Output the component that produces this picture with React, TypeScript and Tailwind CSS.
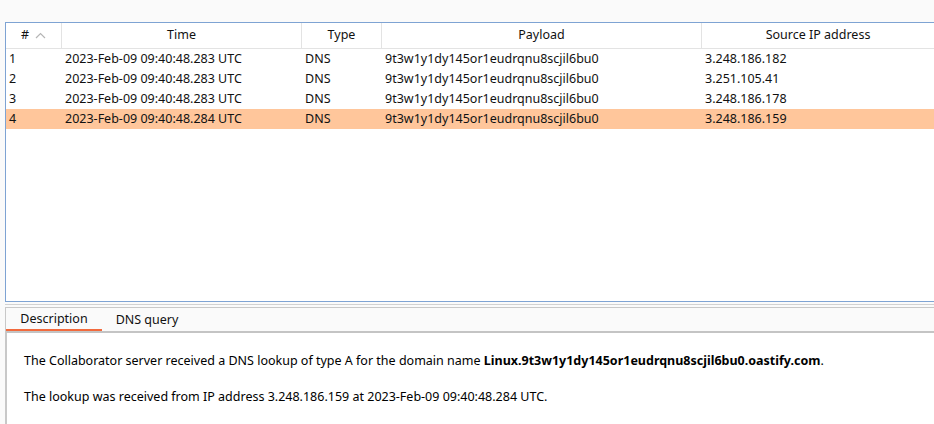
import React from "react";

const rows = [
  { n: "1", time: "2023-Feb-09 09:40:48.283 UTC", type: "DNS", payload: "9t3w1y1dy145or1eudrqnu8scjil6bu0", ip: "3.248.186.182" },
  { n: "2", time: "2023-Feb-09 09:40:48.283 UTC", type: "DNS", payload: "9t3w1y1dy145or1eudrqnu8scjil6bu0", ip: "3.251.105.41" },
  { n: "3", time: "2023-Feb-09 09:40:48.283 UTC", type: "DNS", payload: "9t3w1y1dy145or1eudrqnu8scjil6bu0", ip: "3.248.186.178" },
  { n: "4", time: "2023-Feb-09 09:40:48.284 UTC", type: "DNS", payload: "9t3w1y1dy145or1eudrqnu8scjil6bu0", ip: "3.248.186.159" },
];

const cols = "grid grid-cols-[56px_240px_80px_320px_1fr]";

export default function App() {
  const selected = 3;

  return (
    <div
      className="w-[934px] h-[424px] overflow-hidden bg-[#fafafa] flex flex-col text-[12.5px] text-[#111]"
      style={{ fontFamily: '"Noto Sans", "Open Sans", sans-serif' }}
    >
      <div className="h-[22px] shrink-0" />

      {/* interactions table */}
      <div className="ml-[5px] h-[280px] shrink-0 bg-white border-l border-t border-b border-[#7ea3d3]">
        <div className={`${cols} h-[26px] border-b border-[#e3e3e3]`}>
          <div className="flex items-center justify-center gap-[6px] border-r border-[#e3e3e3]">
            <span>#</span>
            <svg width="11" height="7" viewBox="0 0 11 7" fill="none">
              <path d="M1 6l4.5-4.5L10 6" stroke="#b5b5b5" strokeWidth="1.2" />
            </svg>
          </div>
          <div className="flex items-center justify-center border-r border-[#e3e3e3]">Time</div>
          <div className="flex items-center justify-center border-r border-[#e3e3e3]">Type</div>
          <div className="flex items-center justify-center border-r border-[#e3e3e3]">Payload</div>
          <div className="flex items-center justify-center">Source IP address</div>
        </div>
        {rows.map((r, i) => (
          <div
            key={r.n}
            className={`${cols} h-[20px] items-center ${i === selected ? "bg-[#ffc69b]" : ""}`}
          >
            <div className="pl-[3px]">{r.n}</div>
            <div className="pl-[3px]">{r.time}</div>
            <div className="pl-[3px]">{r.type}</div>
            <div className="pl-[3px]">{r.payload}</div>
            <div className="pl-[3px]">{r.ip}</div>
          </div>
        ))}
      </div>

      <div className="h-[2px] shrink-0" />
      <div className="ml-[5px] h-px shrink-0 bg-[#d2d2d2]" />
      <div className="h-[2px] shrink-0" />

      {/* details pane */}
      <div className="ml-[5px] flex-1 flex flex-col border-t border-l border-[#c8c8c8]">
        <div className="h-[25px] shrink-0 flex items-end bg-[#fafafa] border-b-2 border-[#c4c4c4]">
          <div className="w-[96px] h-full flex items-center justify-center border-b-2 border-[#f26a3d] pt-[1px]">
            Description
          </div>
          <div className="w-[90px] h-full flex items-center justify-center pt-[1px]">DNS query</div>
        </div>
        <div className="flex-1 bg-white border-l border-[#c8c8c8] pl-[17px] pt-[18px] text-black">
          <p className="leading-[19px]">
            The Collaborator server received a DNS lookup of type A for the domain name{" "}
            <b className="font-bold">Linux.9t3w1y1dy145or1eudrqnu8scjil6bu0.oastify.com</b>.
          </p>
          <p className="leading-[19px] mt-[17px]">
            The lookup was received from IP address 3.248.186.159 at 2023-Feb-09 09:40:48.284 UTC.
          </p>
        </div>
      </div>
    </div>
  );
}
